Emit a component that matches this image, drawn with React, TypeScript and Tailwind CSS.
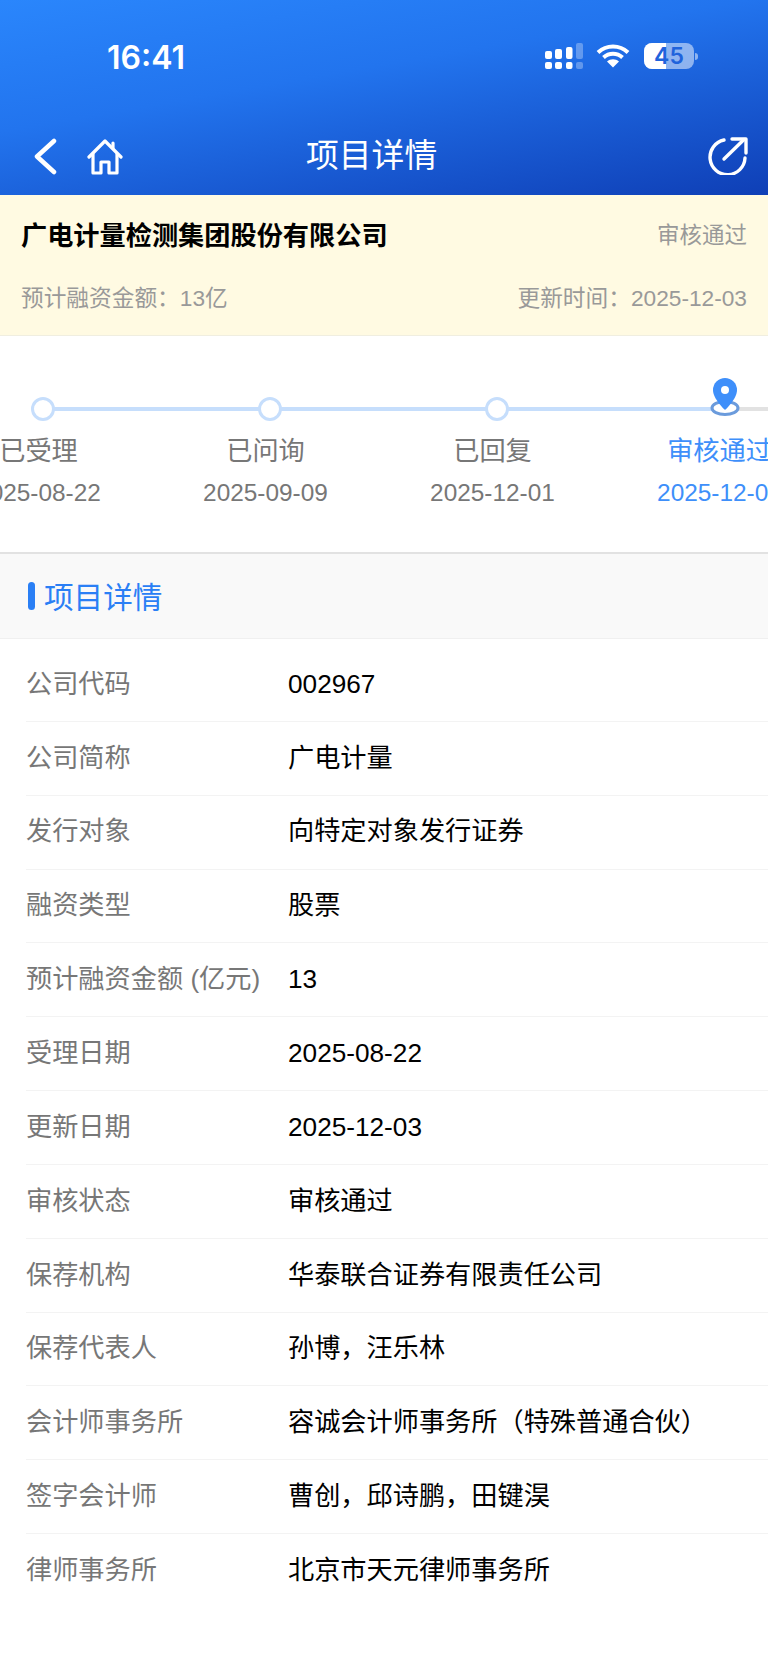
import React from 'react';

const FONT = "font-['Liberation_Sans','Noto_Sans_CJK_SC',sans-serif]";

const steps = [
  { label: '已受理', date: '2025-08-22' },
  { label: '已问询', date: '2025-09-09' },
  { label: '已回复', date: '2025-12-01' },
  { label: '审核通过', date: '2025-12-03', active: true },
];

const rows = [
  ['公司代码', '002967'],
  ['公司简称', '广电计量'],
  ['发行对象', '向特定对象发行证券'],
  ['融资类型', '股票'],
  ['预计融资金额 (亿元)', '13'],
  ['受理日期', '2025-08-22'],
  ['更新日期', '2025-12-03'],
  ['审核状态', '审核通过'],
  ['保荐机构', '华泰联合证券有限责任公司'],
  ['保荐代表人', '孙博，汪乐林'],
  ['会计师事务所', '容诚会计师事务所（特殊普通合伙）'],
  ['签字会计师', '曹创，邱诗鹏，田键淏'],
  ['律师事务所', '北京市天元律师事务所'],
];

const Signal = () => (
  <svg width="38" height="26" viewBox="0 0 38 26" fill="#fff">
    <rect x="0" y="8" width="7" height="8" rx="2" />
    <rect x="10" y="6" width="7" height="10" rx="2" />
    <rect x="21" y="4" width="6.5" height="12" rx="2" />
    <rect x="31" y="0" width="7" height="16" rx="2" opacity="0.3" />
    <rect x="0" y="19" width="7" height="7" rx="2" />
    <rect x="10" y="19" width="7" height="7" rx="2" />
    <rect x="21" y="19" width="6.5" height="7" rx="2" />
    <rect x="31" y="19" width="7" height="7" rx="2" opacity="0.3" />
  </svg>
);

const Wifi = () => (
  <svg width="34" height="24" viewBox="0 0 34 24" fill="none" stroke="#fff" strokeWidth="4">
    <path d="M2 8.5C10.5 0.5 23.5 0.5 32 8.5" />
    <path d="M7.5 13.5C13 8.5 21 8.5 26.5 13.5" />
    <path d="M11 17.5L17 23.5L23 17.5C19.5 14.5 14.5 14.5 11 17.5Z" fill="#fff" stroke="none" />
  </svg>
);

const Battery = () => (
  <div className="flex items-center gap-[1px]">
    <div className="relative flex h-[26px] w-[50px] items-center justify-center overflow-hidden rounded-[8px] bg-white/50">
      <div className="absolute inset-y-0 left-0 w-[22px] bg-white" />
      <span className="relative font-['Inter',sans-serif] text-[23px] font-semibold leading-none text-[#1f63dc]">45</span>
    </div>
    <div className="h-[7px] w-[3px] rounded-r-full bg-white/50" />
  </div>
);

const Back = () => (
  <svg width="24" height="37" viewBox="0 0 24 37" fill="none" stroke="#fff" strokeWidth="4.5" strokeLinecap="round" strokeLinejoin="round">
    <path d="M21 3L4 18.5L21 34" />
  </svg>
);

const Home = () => (
  <svg width="36" height="37" viewBox="0 0 36 37" fill="none" stroke="#fff" strokeWidth="3.2" strokeLinejoin="round" strokeLinecap="round">
    <path d="M2 19L18 3L34 19" />
    <path d="M26 10V5" />
    <path d="M6 16V35H14V24H22V35H30V16" />
  </svg>
);

const Share = () => (
  <svg width="40" height="38" viewBox="0 0 40 38" fill="none" stroke="#fff" strokeWidth="3.4" strokeLinecap="round" strokeLinejoin="round">
    <path d="M16 3A17.5 17.5 0 1 0 37 21" />
    <path d="M16 22L36 2.5" />
    <path d="M24 2H38V16" />
  </svg>
);

const Pin = () => (
  <svg width="30" height="40" viewBox="0 0 30 40" fill="none">
    <ellipse cx="15" cy="31" rx="13" ry="6.5" stroke="#6b9bdc" strokeWidth="3" fill="#fff" />
    <path d="M15 33C15 33 3 22 3 13A12 12 0 0 1 27 13C27 22 15 33 15 33Z" fill="#3e8ffa" />
    <circle cx="15" cy="13" r="4" fill="#fff" />
  </svg>
);

export default function App() {
  return (
    <div className={`${FONT} min-h-[1669px] w-full overflow-hidden bg-white`}>
      <header className="h-[195px] bg-[linear-gradient(170deg,#2a86fc_0%,#2274ee_40%,#0f3fb6_100%)] text-white">
        <div className="flex h-[137px] items-start pl-[107px] pt-[39px]">
          <span className="w-[81px] whitespace-nowrap font-['Inter',sans-serif] text-[32px] font-semibold leading-[38px]">16:41</span>
          <div className="ml-[357px] mt-[4px] flex items-center">
            <Signal />
            <div className="ml-[13px]">
              <Wifi />
            </div>
            <div className="ml-[14px]">
              <Battery />
            </div>
          </div>
        </div>
        <div className="flex items-center pl-[33px]">
          <Back />
          <div className="ml-[30px]">
            <Home />
          </div>
          <h1 className="ml-[183px] w-[131px] whitespace-nowrap text-[32.8px] font-normal leading-[38px]">项目详情</h1>
          <div className="ml-[271px]">
            <Share />
          </div>
        </div>
      </header>

      <section className="flex h-[141px] flex-col border-b border-[#f0eee0] bg-[#fffae2] px-[21px] pt-[25px]">
        <div className="flex items-center justify-between">
          <span className="text-[26.2px] font-bold leading-[32px] text-black">广电计量检测集团股份有限公司</span>
          <span className="text-[22.5px] leading-[32px] text-[#999]">审核通过</span>
        </div>
        <div className="mt-[30px] flex items-center justify-between text-[22.7px] leading-[32px] text-[#999]">
          <span>预计融资金额：13亿</span>
          <span>更新时间：2025-12-03</span>
        </div>
      </section>

      <section className="flex h-[216px] overflow-hidden pt-[61px]">
        <div className="ml-[-75px] flex shrink-0">
          {steps.map((s) => (
            <div key={s.label} className="relative flex w-[227px] shrink-0 flex-col items-center">
              {/* track runs to the next step */}
              <div className={`absolute left-[117px] top-[10px] h-[4px] w-[227px] ${s.active ? 'bg-[#e2e2e2]' : 'bg-[#c6defc]'}`} />
              <div className="relative ml-[8px] h-[24px]">
                {s.active ? (
                  <div className="absolute left-[-14px] top-[-20px]">
                    <Pin />
                  </div>
                ) : (
                  <div className="h-[24px] w-[24px] rounded-full border-[3px] border-[#c6defc] bg-white" />
                )}
              </div>
              <div className={`mt-[12px] whitespace-nowrap text-[26.2px] leading-[36px] ${s.active ? 'text-[#3e8ffa]' : 'text-[#777]'}`}>{s.label}</div>
              <div className={`mt-[6px] whitespace-nowrap text-[24.4px] leading-[36px] ${s.active ? 'text-[#3e8ffa]' : 'text-[#777]'}`}>{s.date}</div>
            </div>
          ))}
        </div>
      </section>

      <section>
        <div className="flex h-[87px] items-center border-t-2 border-b border-t-[#e2e2e2] border-b-[#f0f0f0] bg-[#f9f9f9] pl-[28px]">
          <span className="h-[28px] w-[7px] rounded-full bg-[#2a7ff5]" />
          <span className="ml-[9px] pt-[3px] text-[29.6px] leading-[36px] text-[#2a7ff5]">项目详情</span>
        </div>
        <div className="pl-[26px] pt-[9px]">
          {rows.map(([k, v], i) => (
            <div key={k} className={`flex h-[73.85px] items-center ${i < rows.length - 1 ? 'border-b border-[#f3f3f3]' : ''}`}>
              <span className="w-[262px] shrink-0 text-[26.2px] text-[#777]">{k}</span>
              <span className="text-[26.2px] text-black">{v}</span>
            </div>
          ))}
        </div>
      </section>
    </div>
  );
}
